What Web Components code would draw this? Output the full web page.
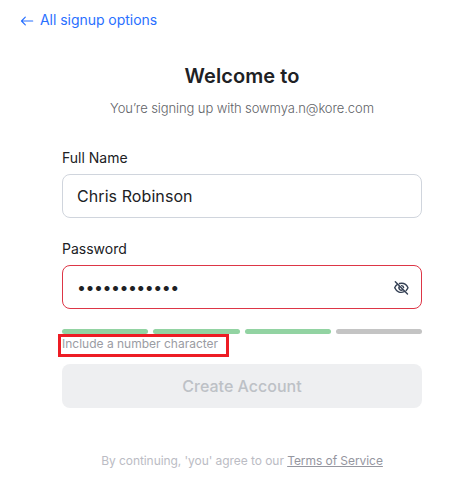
<!DOCTYPE html>
<html lang="en">
<head>
<meta charset="utf-8">
<title>Sign up</title>
<style>
html,body{margin:0;height:100%;background:#fff;overflow:hidden}
body{font-family:Inter,"Liberation Sans",sans-serif;color:#202124}
</style>
</head>
<body>
<signup-page></signup-page>
<script>
const define = (name, html) => customElements.define(name, class extends HTMLElement {
  constructor() {
    super();
    this.attachShadow({ mode: 'open' }).innerHTML = html;
  }
});

define('back-link', `
<style>
:host{display:flex;align-items:center;height:20px;gap:6px;font-size:14px;line-height:20px;letter-spacing:-.04px;color:#2970ff}
svg{display:block;width:14px;height:14px}
span{white-space:nowrap}
</style>
<svg viewBox="0 0 14 14" fill="none" stroke="currentColor" stroke-width="1.2" stroke-linecap="round" stroke-linejoin="round"><path d="M12.7 8H1.5M5.3 4.2L1.5 8l3.8 3.8"/></svg>
<span><slot></slot></span>`);

define('page-heading', `
<style>
:host{display:block;text-align:center;white-space:nowrap}
h1{margin:0;font-size:20px;line-height:28px;font-weight:600;letter-spacing:.08px;color:#202124}
p{margin:9px 0 0;font-size:13px;line-height:18px;font-weight:300;letter-spacing:-.09px;color:#5f6368}
</style>
<h1><slot name="title"></slot></h1><p><slot></slot></p>`);

define('form-field', `
<style>
:host{display:block;--line:#d0d5dd}
:host([invalid]){--line:#dd3646}
label{display:block;font-size:14px;line-height:20px;color:#202124}
div{box-sizing:border-box;height:44px;margin-top:6px;border:1px solid var(--line);border-radius:8px;padding:0 12px 0 14px;display:flex;align-items:center;justify-content:space-between;font-size:16px;line-height:24px;letter-spacing:.08px}
</style>
<label><slot name="label"></slot></label>
<div><slot></slot><slot name="action"></slot></div>`);

define('password-dots', `
<style>
:host{display:block;white-space:nowrap;font-size:16px;letter-spacing:-.52px}
</style><slot></slot>`);

define('eye-off-icon', `
<style>:host{display:block;width:15px;height:14px;margin-top:1px}svg{display:block;overflow:visible}</style>
<svg width="15" height="14" viewBox="0 0 15 14" fill="none" stroke="#344054" stroke-width="1.4" stroke-linecap="round" stroke-linejoin="round">
<path d="M5.5 2.5C9.6 1.5 12.6 3.6 14 6.8 13.5 7.9 12.9 8.7 12.2 9.4M3.4 3.4C2.2 4.2 1.3 5.4.7 6.8c1.6 3.6 5.5 5.7 9.4 3.9M5.6 5.2a2.3 2.3 0 0 0 3.3 3.2M7.6 4.6a2.2 2.2 0 0 1 2 2M1.3.7l12.2 12.3"/></svg>`);

define('strength-meter', `
<style>
:host{display:grid;grid-template-columns:repeat(4,1fr);gap:5px;height:5px}
i{background:#92d3a2;border-radius:3px}
i:last-child{background:#c4c4c4}
</style><i></i><i></i><i></i><i></i>`);

define('callout-hint', `
<style>
:host{display:block;box-sizing:border-box;width:171px;height:23px;margin-left:-4px;border:3px solid #ed1c24;padding-left:1px;font-size:12px;line-height:14px;color:#9a9ca3;white-space:nowrap}
</style><slot></slot>`);

define('submit-button', `
<style>
:host{display:block}
button{display:block;width:100%;height:44px;border:0;border-radius:8px;padding:0;background:#eeeff1;color:#bdc1c6;font:500 16px/24px Inter,"Liberation Sans",sans-serif}
</style><button disabled><slot></slot></button>`);

define('terms-note', `
<style>
:host{display:block;text-align:center;font-size:12px;line-height:18px;letter-spacing:-.06px;color:#bbbcc4;white-space:nowrap}
::slotted(a){color:#95969f;text-decoration:underline}
</style><slot></slot>`);

define('signup-page', `
<style>
:host{display:block;padding:10px 0 0 20px}
main{width:360px;margin-left:42px;display:flex;flex-direction:column}
page-heading{margin-top:32px}
form-field{margin-top:31px}
form-field + form-field{margin-top:21px}
strength-meter{margin-top:20px}
submit-button{margin-top:7px}
terms-note{margin-top:44px}
</style>
<back-link>All signup options</back-link>
<main>
<page-heading><span slot="title">Welcome to</span>You’re signing up with sowmya.n@kore.com</page-heading>
<form-field><span slot="label">Full Name</span><span>Chris Robinson</span></form-field>
<form-field invalid><span slot="label">Password</span><password-dots>••••••••••••</password-dots><eye-off-icon slot="action"></eye-off-icon></form-field>
<strength-meter></strength-meter>
<callout-hint>Include a number character</callout-hint>
<submit-button>Create Account</submit-button>
<terms-note>By continuing, 'you' agree to our <a>Terms of Service</a></terms-note>
</main>`);
</script>
</body>
</html>
